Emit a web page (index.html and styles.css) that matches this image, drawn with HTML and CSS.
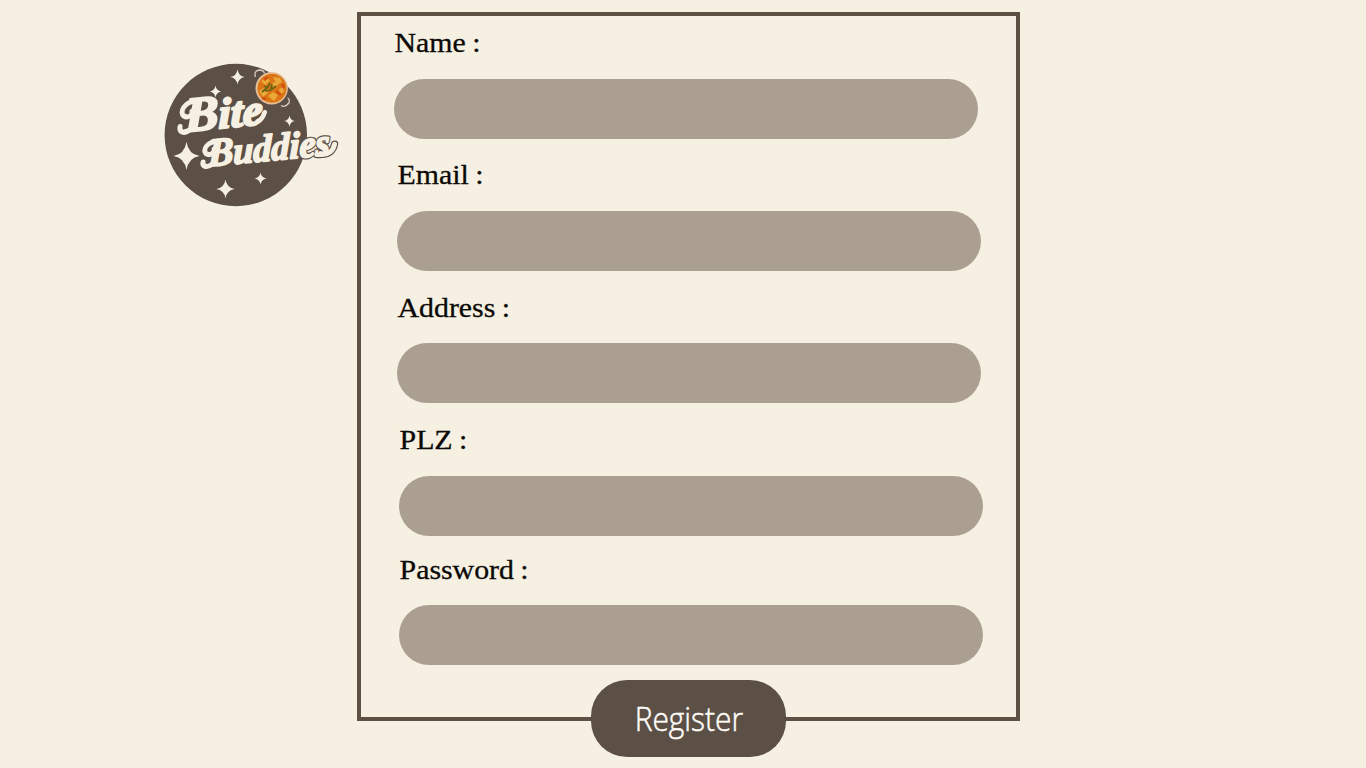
FILE: index.html
```html
<!DOCTYPE html>
<html lang="en">
<head>
<meta charset="utf-8">
<title>Bite Buddies – Register</title>
<link rel="stylesheet" href="styles.css">
</head>
<body>
<main class="page">
  <svg class="logo" viewBox="155 55 200 160" role="img" aria-label="Bite Buddies">
    <defs>
      <path id="star" d="M0-10Q1.3-1.3 9 0Q1.3 1.3 0 10Q-1.3 1.3-9 0Q-1.3-1.3 0-10Z"/>
    </defs>
    <circle class="disc" cx="235.8" cy="135" r="71.2"/>
    <g class="cream">
      <use href="#star" transform="translate(237.5 77) scale(.8 .76)"/>
      <use href="#star" transform="translate(215.5 91.5) scale(.62 .6)"/>
      <use href="#star" transform="translate(289.5 121) scale(.6 .56)"/>
      <use href="#star" transform="translate(186.5 156) scale(1.45 1.4)"/>
      <use href="#star" transform="translate(260.5 178.5) scale(.65 .6)"/>
      <use href="#star" transform="translate(225.5 189) scale(1.02 .92)"/>
    </g>
    <g class="lettering">
      <g transform="translate(185 132) rotate(-6) skewX(-6)">
        <text class="word bite" textLength="78" lengthAdjust="spacingAndGlyphs">B<tspan class="bite-tail">ite</tspan></text>
        <path class="swash" d="M11-30C-1-30-6-20-1-16C3-13 8-16 7-20M5-2C-1 3-6-1-5-6M73-3C77-4 79-8 80-11"/>
      </g>
      <g transform="translate(208 166.500) rotate(-5.500) skewX(-6)">
        <path class="swash-edge" d="M113-2C121 1 126-4 127-10"/>
        <text class="word buddies edge" textLength="122" lengthAdjust="spacingAndGlyphs">B<tspan class="buddies-tail">uddies</tspan></text>
        <text class="word buddies" textLength="122" lengthAdjust="spacingAndGlyphs">B<tspan class="buddies-tail">uddies</tspan></text>
        <path class="swash" d="M9-24C-1-25-6-17-2-13C2-10 7-13 6-17M4-2C-1 2-6-1-5-5M113-2C121 1 126-4 127-10"/>
      </g>
    </g>
    <g class="handle">
      <path d="M255.5 77Q253.5 71 259 70Q264 70 264.500 73.500"/>
      <path d="M281 105.500Q284.500 108 289 103Q290 99 287.500 98"/>
    </g>
    <circle cx="271.700" cy="88.300" r="16.200" fill="#e6c09a"/>
    <circle cx="272" cy="88.300" r="14.500" fill="#dc7615"/>
    <path fill="#e9a838" d="M261 81l6-4 3 4-5 4zM273 77l7 1 2 4-5 3zM259 91l5-3 4 5-5 4zM268 96l5-4 5 3-4 6zM279 89l4-2 1 5-4 2zM271 84l4-2 3 4-5 1z"/>
    <path d="M264 80l4-3M276 91l5 4M262 98l4 1M282 84l2 4" stroke="#d24d10" stroke-width="2.500"/>
    <path d="M262 92l6-5 2-4M265 91l6-1 5-4M268 88l-4-2M271 89l1-5" stroke="#6c6415" stroke-width="1.700" fill="none"/>
  </svg>

  <form class="card">
    <div class="field">
      <label class="label" for="name">Name :</label>
      <input class="input" id="name" type="text">
    </div>
    <div class="field field-indent">
      <label class="label" for="email">Email :</label>
      <input class="input" id="email" type="email">
    </div>
    <div class="field field-indent field-address">
      <label class="label label-low" for="address">Address :</label>
      <input class="input" id="address" type="text">
    </div>
    <div class="field field-deep field-plz">
      <label class="label" for="plz">PLZ :</label>
      <input class="input" id="plz" type="text">
    </div>
    <div class="field field-deep field-last">
      <label class="label label-low" for="password">Password :</label>
      <input class="input" id="password" type="password">
    </div>
    <button class="register" type="button"><span class="register-text">Register</span></button>
  </form>
</main>
</body>
</html>
```
FILE: styles.css
```css
* { box-sizing: border-box; }
body { margin: 0; background: #f6f0e2; }
.page {
  display: flex;
  align-items: flex-start;
  height: 768px;
  padding: 12px 0 0 155px;
  overflow: hidden;
}
.logo { width: 200px; height: 160px; margin: 43px 2px 0 0; flex: none; }
.disc { fill: #5c4f46; }
.cream { fill: #f6f0e2; }
.word {
  font-family: "Liberation Serif", serif;
  font-weight: bold;
  font-style: italic;
  fill: #f6f0e2;
  stroke: #f6f0e2;
  stroke-width: 2.2px;
  stroke-linejoin: round;
}
.bite { font-size: 49px; }
.bite-tail { font-size: 43px; }
.buddies { font-size: 40px; stroke-width: 1.8px; }
.buddies-tail { font-size: 38px; }
.edge { stroke: #5c4f46; stroke-width: 4.2px; }
.swash, .swash-edge { fill: none; stroke: #f6f0e2; stroke-width: 5px; stroke-linecap: round; }
.swash-edge { stroke: #5c4f46; stroke-width: 7.4px; }
.handle { fill: none; stroke: #d8cabd; stroke-width: 1.3px; }

.card {
  display: flex;
  flex-direction: column;
  width: 663px;
  height: 709px;
  padding: 11px 0 0 33px;
  border: 4px solid #5e5144;
  flex: none;
}
.field { width: 584px; margin-bottom: 20px; flex: none; }
.field-indent { margin-left: 2.5px; }
.field-deep { margin-left: 5px; }
.field-address { margin-bottom: 21px; }
.field-plz { margin-bottom: 17px; }
.field-last { margin-bottom: 15px; }
.label {
  display: block;
  width: max-content;
  height: 52px;
  line-height: 33px;
  padding-left: 0.5px;
  font-family: "Liberation Serif", serif;
  font-size: 27px;
  word-spacing: -1px;
  color: #0b0906;
  -webkit-text-stroke: 0.3px #0b0906;
  white-space: nowrap;
  transform: scaleX(1.105);
  transform-origin: left;
}
.label-low { line-height: 35px; }
.input {
  display: block;
  width: 584px;
  height: 59.5px;
  margin-bottom: 0.5px;
  padding: 0 28px;
  border: 0;
  border-radius: 30px;
  background: #ab9f92;
  font: 24px "Liberation Serif", serif;
  outline: 0;
}
.field { height: 112px; }
.register {
  display: flex;
  align-items: center;
  justify-content: center;
  width: 195px;
  height: 77px;
  margin-left: 197px;
  padding: 0 0 1px;
  border: 0;
  border-radius: 36px;
  background: #5c4f46;
  color: #fffdf8;
  flex: none;
}
.register-text {
  font: 300 33px "Open Sans", sans-serif;
  -webkit-text-stroke: 0.5px #fffdf8;
  transform: scaleX(.905);
}
```
